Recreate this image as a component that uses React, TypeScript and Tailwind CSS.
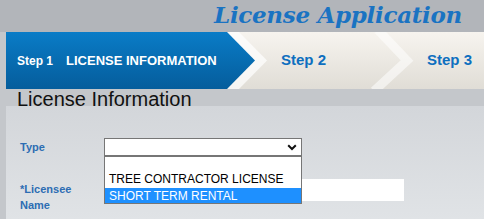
import React from "react";

export default function App() {
  return (
    <div className="w-[484px] h-[219px] overflow-hidden bg-[#c4c7cb] flex flex-col font-['Liberation_Sans',Arial,sans-serif]">
      <div className="h-[32px] shrink-0 bg-[#b2b5ba] flex justify-end items-start pr-[22px]">
        <div className="font-['DejaVu_Serif',Georgia,serif] italic font-bold text-[23px] leading-none pt-[3px] text-[#1a73c2] tracking-[-0.3px]">
          License Application
        </div>
      </div>
      <div className="ml-[6px] h-[57px] shrink-0 relative flex items-center bg-gradient-to-b from-[#f7f4ef] to-[#e0ddd6]">
        <svg className="absolute inset-0 pointer-events-none" width="478" height="57" viewBox="0 0 478 57">
          <polyline points="224,-2 254,28.5 224,59" fill="none" stroke="#ffffff" strokeOpacity="0.7" strokeWidth="10" />
          <polyline points="372,-2 401,28.5 368,59" fill="none" stroke="#ffffff" strokeOpacity="0.55" strokeWidth="9" />
        </svg>
        <div className="relative h-full w-[249px] flex items-center pl-[11px] bg-gradient-to-b from-[#0a7cc7] to-[#055d9c] [clip-path:polygon(0_0,221px_0,249px_50%,221px_100%,0_100%)] text-white font-bold">
          <span className="text-[12px]">Step 1</span>
          <span className="text-[13px] ml-[13px]">LICENSE INFORMATION</span>
        </div>
        <span className="relative ml-[26px] text-[15px] font-bold text-[#0d6fbf]">Step 2</span>
        <span className="relative ml-[101px] text-[15px] font-bold text-[#0d6fbf]">Step 3</span>
      </div>
      <div className="h-[17px] shrink-0 pl-[17px]">
        <div className="text-[20px] leading-none text-[#111]">License Information</div>
      </div>
      <div className="ml-[6px] flex-1 bg-gradient-to-b from-[#d3d6da] to-[#e0e3e6] pt-[32px] pl-[14px]">
        <div className="flex items-center h-[18px]">
          <div className="w-[84px] text-[11px] font-bold text-[#2d6db3]">Type</div>
          <div className="relative w-[198px] h-[18px] bg-white border border-[#767676]">
            <svg className="absolute right-[4px] top-[5px]" width="10" height="7" viewBox="0 0 10 7">
              <path d="M1.2 1.2 L5 5 L8.8 1.2" fill="none" stroke="#111" strokeWidth="2" />
            </svg>
            <div className="absolute left-[-1px] top-[17px] w-[198px] h-[48px] bg-white border border-[#767676] flex flex-col text-[12px] leading-none text-black">
              <div className="h-[15px]" />
              <div className="h-[16px] flex items-center pl-[4px] pb-[2px]">TREE CONTRACTOR LICENSE</div>
              <div className="h-[15px] flex items-center pl-[4px] bg-[#1e90ff] text-white">SHORT TERM RENTAL</div>
            </div>
          </div>
        </div>
        <div className="flex items-start mt-[23px]">
          <div className="w-[84px] pt-[2px] text-[11px] leading-[16px] font-bold text-[#2d6db3]">
            *Licensee
            <br />
            Name
          </div>
          <div className="w-[300px] h-[22px] bg-white" />
        </div>
      </div>
    </div>
  );
}
